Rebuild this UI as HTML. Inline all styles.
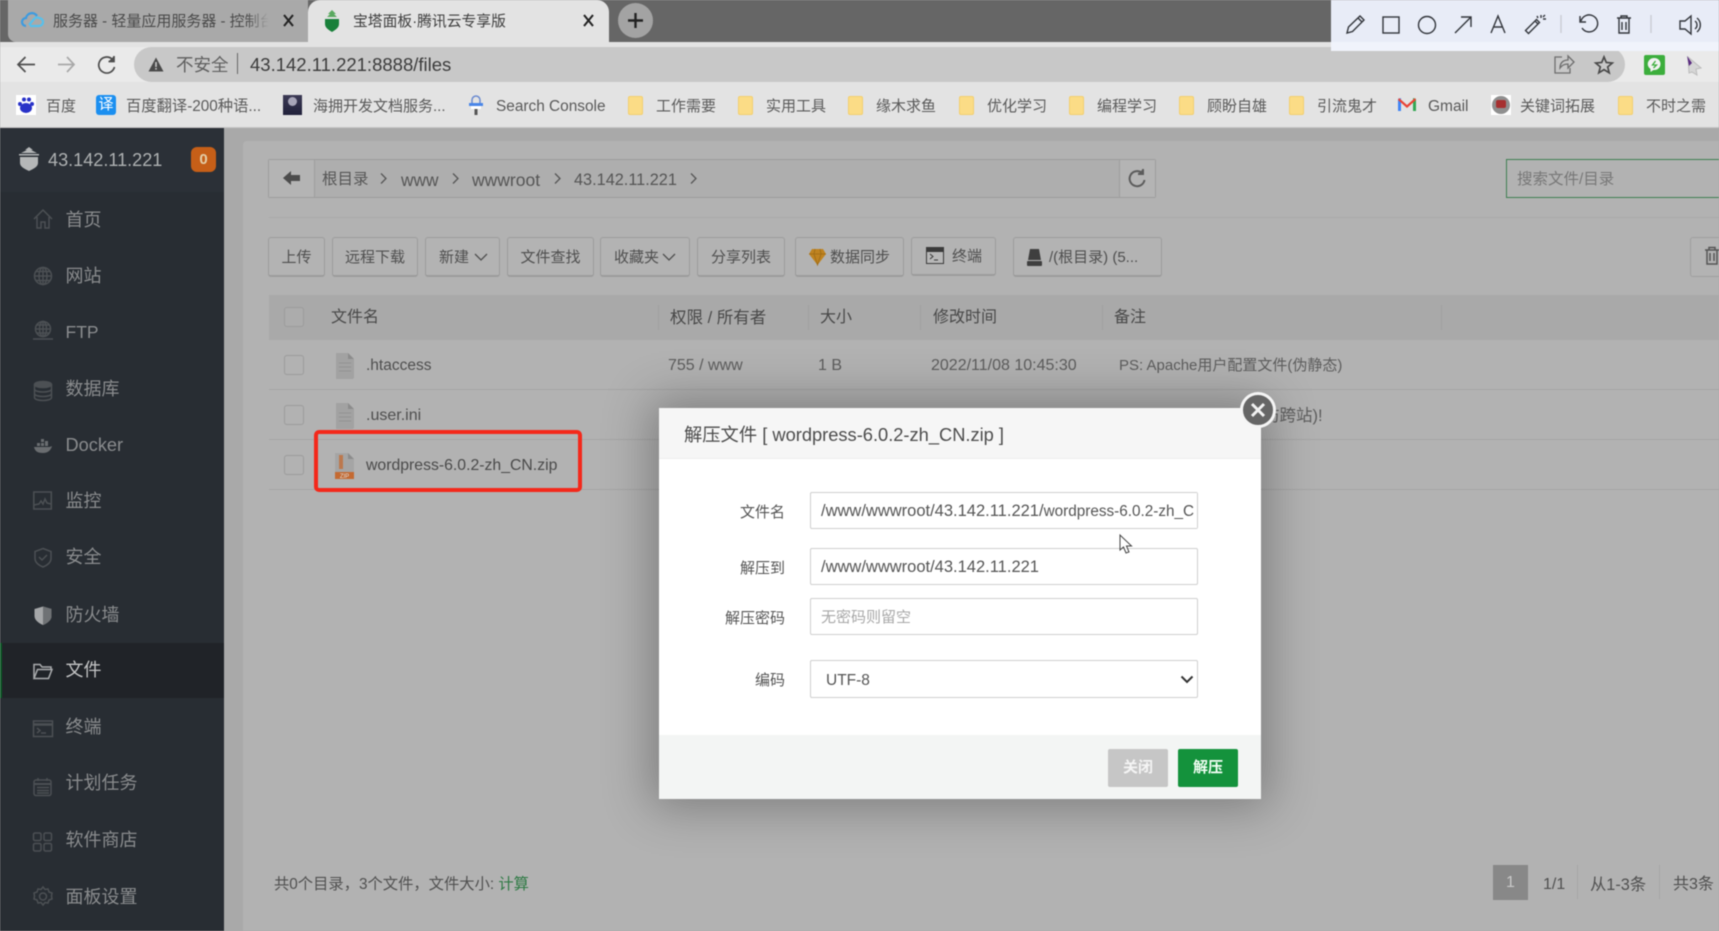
<!DOCTYPE html>
<html lang="zh-CN"><head><meta charset="utf-8"><title>宝塔面板·腾讯云专享版</title>
<style>
*{box-sizing:border-box}
html,body{margin:0;padding:0;width:1719px;height:931px;overflow:hidden;background:#aaa}
body{font-family:"Liberation Sans","Noto Sans CJK SC",sans-serif;color:#555;position:relative}
#root{position:absolute;left:0;top:0;width:1719px;height:931px;overflow:hidden;filter:blur(.45px)}
.b{position:absolute}
.t{position:absolute;white-space:nowrap;line-height:20px;height:20px}
svg{position:absolute;overflow:visible}
.bm{font-size:15px;top:97px;color:#5a5a5a}
.fd{position:absolute;top:96px;width:15px;height:19px;background:#fbdc86;border:1px solid #f3cf6e;border-radius:2px}
.m{font-size:18px;left:65.500px;color:#8a8c8e}
.ic{fill:none;stroke:#4c5054;stroke-width:1.5}
.btn{position:absolute;top:237px;height:40px;border:1px solid #9c9c9c;border-bottom-width:2px;border-radius:3px;background:#b3b3b3;font-size:15px;color:#4f4f4f;text-align:center;line-height:39px;white-space:nowrap}
.chk{position:absolute;left:284px;width:20px;height:20px;border:1px solid #9b9b9b;border-radius:3px;background:#b2b2b2}
.hd{font-size:16.500px;top:308px;color:#484848}
.sep{position:absolute;top:305px;width:1px;height:25px;background:#a0a0a0}
.cell{font-size:16px;color:#5d5d5d}
.ln{position:absolute;left:269px;right:0;height:1px;background:#a5a5a5}
.lbl{position:absolute;width:100px;left:685px;text-align:right;font-size:15px;line-height:20px;color:#555}
.inp{position:absolute;left:810px;width:388px;height:37px;background:#fff;border:1px solid #cfcfcf;border-radius:2px;font-size:16.5px;line-height:37px;padding-left:10px;color:#555;white-space:nowrap;overflow:hidden}
.tool{fill:none;stroke:#33363c;stroke-width:1.4}
.crumb{fill:none;stroke:#555;stroke-width:1.3}
</style></head><body><div id="root">

<!-- tab strip -->
<div class="b" style="left:0;top:0;width:1719px;height:42px;background:#666"></div>
<div class="b" style="left:8px;top:0;width:300px;height:42px;background:#a9a9a9;border-radius:0 0 0 8px"></div>
<div class="b" style="left:308px;top:0;width:301px;height:42px;background:#e3e3e3;border-radius:12px 12px 0 0"></div>
<svg style="left:22px;top:11px" width="22" height="18" viewBox="0 0 22 18"><path d="M4 15a4 4 0 0 1 0-8a6 6 0 0 1 11-2" fill="none" stroke="#3d9be0" stroke-width="2.2"/><path d="M8 15h9a4 4 0 0 0 0-8a4 4 0 0 0-5 1l-5 6" fill="none" stroke="#57c0ec" stroke-width="2.2"/></svg>
<div class="t" style="left:53px;top:12px;width:220px;overflow:hidden;font-size:15px;color:#4a4a4a">服务器 - 轻量应用服务器 - 控制台</div>
<div class="b" style="left:246px;top:10px;width:27px;height:22px;background:linear-gradient(90deg,rgba(169,169,169,0),#a9a9a9 85%)"></div>
<svg style="left:283px;top:14px" width="11" height="13"><path d="M1 1l9 11M10 1L1 12" stroke="#222" stroke-width="2"/></svg>
<svg style="left:323px;top:10px" width="18" height="22" viewBox="0 0 18 22"><path d="M9 0l4 4h-2l3 3H4l3-3H5z" fill="#5aa960"/><path d="M2 9h14v5c0 4-4 6-7 8c-3-2-7-4-7-8z" fill="#18803a"/></svg>
<div class="t" style="left:353px;top:12px;font-size:14.800px;color:#3e3e3e">宝塔面板·腾讯云专享版</div>
<svg style="left:583px;top:14px" width="11" height="13"><path d="M1 1l9 11M10 1L1 12" stroke="#222" stroke-width="2"/></svg>
<div class="b" style="left:618px;top:3px;width:35px;height:35px;border-radius:50%;background:#a3a3a3"></div>
<svg style="left:626px;top:11px" width="19" height="19"><path d="M9.5 2v15M2 9.5h15" stroke="#222" stroke-width="2.4"/></svg>

<!-- toolbar -->
<div class="b" style="left:0;top:42px;width:1719px;height:40px;background:#eaeaea"></div>
<div class="b" style="left:0;top:42px;width:1719px;height:5px;background:#e3e3e3"></div>
<div class="b" style="left:134px;top:47px;width:1491px;height:35px;background:#c8c8c8;border-radius:18px"></div>
<svg style="left:16px;top:54px" width="120" height="22" fill="none" stroke="#4e4e4e" stroke-width="1.7"><path d="M19 10.500H2M9.500 3L2 10.500 9.500 18"/><path d="M42 10.500h16M51 3l7 7.500-7 7.500" stroke="#a8a8a8"/><path d="M96 5a8 8 0 1 0 2.500 8"/><path d="M98 2v5.500h-5.500" fill="#4e4e4e"/></svg>
<svg style="left:148px;top:57px" width="16" height="15"><path d="M8 0.500L15.500 14.500H.5z" fill="#4a4a4a"/><rect x="7.200" y="5" width="1.600" height="5" fill="#c8c8c8"/><rect x="7.200" y="11" width="1.600" height="1.600" fill="#c8c8c8"/></svg>
<div class="t" style="left:176px;top:55px;font-size:17.500px;color:#5f5f5f">不安全</div>
<div class="b" style="left:237px;top:53px;width:1px;height:21px;background:#666"></div>
<div class="t" style="left:250px;top:55px;font-size:18.500px;color:#3c3c3c">43.142.11.221:8888/files</div>
<svg style="left:1553px;top:54px" width="60" height="22" fill="none" stroke="#6e6e6e" stroke-width="1.300"><path d="M9 3H2v16h15v-5"/><path d="M7 14c0-5 3-8 8-8V2l6 6-6 6v-4c-3 0-6 1-8 4z"/><path d="M51 3l2.300 5.500 6 .5-4.600 3.900 1.500 5.900-5.200-3.200-5.200 3.200 1.500-5.900-4.600-3.900 6-.5z" stroke="#4a4a4a" stroke-width="1.700"/></svg>
<div class="b" style="left:1644px;top:55px;width:21px;height:20px;background:#3cae3c;border-radius:2px"></div>
<svg style="left:1647px;top:57px" width="15" height="16"><path d="M7.500 1a6 6 0 0 1 0 12h-1l-3 2v-3a6 6 0 0 1 4-11z" fill="#f2f2f2"/><path d="M8.500 4L5.500 8h4l-3 3" fill="none" stroke="#3cae3c" stroke-width="1.300"/></svg>
<svg style="left:1686px;top:56px" width="16" height="20"><path d="M2 1l13 11-5 1 1 6-5-3-3 1z" fill="#d6d6d6" stroke="#bbb"/><path d="M1 0l2 10 3-3z" fill="#5a2a80"/></svg>

<!-- bookmarks -->
<div class="b" style="left:0;top:82px;width:1719px;height:45px;background:#e3e3e3"></div>
<div class="b" style="left:0;top:127px;width:1719px;height:1px;background:#c6c6c6"></div>
<div class="b" style="left:16px;top:95px;width:20px;height:20px;background:#fff"></div>
<svg style="left:17px;top:96px" width="18" height="18"><ellipse cx="9" cy="12" rx="6" ry="5" fill="#2932c8"/><circle cx="3" cy="8" r="2" fill="#2932c8"/><circle cx="15" cy="8" r="2" fill="#2932c8"/><circle cx="7" cy="3.500" r="2" fill="#2932c8"/><circle cx="12" cy="3.500" r="2" fill="#2932c8"/></svg>
<div class="t bm" style="left:46px">百度</div>
<div class="b" style="left:96px;top:95px;width:20px;height:20px;background:#1b8ff0;border-radius:3px;color:#fff;font-size:15px;line-height:20px;text-align:center">译</div>
<div class="t bm" style="left:126px;font-size:15.300px">百度翻译-200种语...</div>
<div class="b" style="left:283px;top:95px;width:19px;height:20px;background:linear-gradient(#3c3a55,#20203a)"></div>
<div class="b" style="left:288px;top:97px;width:9px;height:9px;border-radius:50%;background:#a7a5b8"></div>
<div class="t bm" style="left:313px">海拥开发文档服务...</div>
<svg style="left:468px;top:95px" width="16" height="20"><path d="M4 8V5a4 4 0 0 1 8 0v3" fill="none" stroke="#6a8ad0" stroke-width="1.500"/><rect x="1" y="8" width="14" height="3" fill="#4a86e8"/><rect x="3" y="11" width="10" height="3" fill="#fff"/><path d="M8 20v-6" stroke="#555" stroke-width="3"/></svg>
<div class="t bm" style="left:496px;font-size:15.400px">Search Console</div>
<div class="fd" style="left:628px"></div><div class="t bm" style="left:656px">工作需要</div>
<div class="fd" style="left:738px"></div><div class="t bm" style="left:766px">实用工具</div>
<div class="fd" style="left:848px"></div><div class="t bm" style="left:876px">缘木求鱼</div>
<div class="fd" style="left:959px"></div><div class="t bm" style="left:987px">优化学习</div>
<div class="fd" style="left:1069px"></div><div class="t bm" style="left:1097px">编程学习</div>
<div class="fd" style="left:1179px"></div><div class="t bm" style="left:1207px">顾盼自雄</div>
<div class="fd" style="left:1289px"></div><div class="t bm" style="left:1317px">引流鬼才</div>
<svg style="left:1398px;top:97px" width="18" height="15"><path d="M0 14V2l3-1v13z" fill="#4285f4"/><path d="M18 14V2l-3-1v13z" fill="#34a853"/><path d="M1 1l8 7 8-7 1 2-9 8-9-8z" fill="#ea4335"/></svg>
<div class="t bm" style="left:1428px;font-size:15.500px">Gmail</div>
<div class="b" style="left:1491px;top:95px;width:20px;height:20px;background:#fff"></div>
<div class="b" style="left:1492px;top:96px;width:18px;height:18px;background:#8f8f8f;border-radius:50%"></div>
<div class="b" style="left:1496px;top:100px;width:10px;height:8px;background:#a63030;border-radius:2px"></div>
<div class="t bm" style="left:1520px">关键词拓展</div>
<div class="fd" style="left:1618px"></div><div class="t bm" style="left:1646px">不时之需</div>

<!-- annotation toolbar -->
<div class="b" style="left:1331px;top:0;width:388px;height:42px;background:#e8ecf7"></div>
<div class="b" style="left:1331px;top:42px;width:388px;height:9px;background:#f0f3fb"></div>
<svg style="left:1331px;top:0" width="388" height="50" class="tool">
<path d="M16 33l1.500-6L29 16l4 4-11.500 11.500zM27 18l4 4"/>
<rect x="52" y="17" width="16" height="16"/>
<circle cx="96" cy="25" r="8.500"/>
<path d="M124 33l16-16M130 17h10v10"/>
<path d="M160 33l7-17 7 17M162.500 27h9"/>
<path transform="translate(3,0)" d="M194 33l-2.500-2.500 11-11 3 3-11 11zM201 21l3 3M207 15v3M212 19h-3M211 15l-2 2M203 16l1 2"/>
<path d="M230 15v18" stroke="#c9ccd4"/>
<path transform="translate(-3,0)" d="M252 16v6h6M253 21a8.500 8.500 0 1 1 1 7"/>
<path transform="translate(3,0)" d="M283 18h14M287 18v-2h6v2M285 18v15h10V18M288 22v8M292 22v8"/>
<path d="M320 15v18" stroke="#c9ccd4"/>
<path transform="translate(-2,0)" d="M351 21h5l6-5v18l-6-5h-5zM366 21a5 5 0 0 1 0 8M368 18a9 9 0 0 1 0 14"/>
</svg>

<!-- page background -->
<div class="b" style="left:0;top:128px;width:1719px;height:803px;background:#a9a9a9"></div>
<div class="b" style="left:243px;top:141px;width:1476px;height:790px;background:#b2b2b2;border-radius:4px 0 0 0"></div>

<!-- sidebar -->
<div class="b" style="left:0;top:128px;width:224px;height:803px;background:#282d33"></div>
<div class="b" style="left:0;top:128px;width:224px;height:64px;background:#2b3037"></div>
<svg style="left:18px;top:147px" width="22" height="24"><path d="M11 0l4 3h-2l6 3H3l6-3H7z" fill="#b5b7b8"/><rect x="1" y="7" width="20" height="1.500" fill="#b5b7b8"/><path d="M2 10h18v6c0 4-5 6-9 8c-4-2-9-4-9-8z" fill="#b5b7b8"/></svg>
<div class="t" style="left:48px;top:150px;font-size:18.100px;color:#aeb1b2">43.142.11.221</div>
<div class="b" style="left:191px;top:147px;width:25px;height:25px;background:#c65f18;border-radius:6px;color:#e4cfa9;font-size:15px;font-weight:bold;text-align:center;line-height:25px">0</div>
<div class="b" style="left:0;top:643px;width:224px;height:55px;background:#202328"></div>
<div class="b" style="left:0;top:643px;width:2px;height:55px;background:#0b5a25"></div>

<svg style="left:33px;top:205px" width="20" height="710" class="ic">
<path d="M1 15L10 6l9 9M4 13v11h4v-6h4v6h4V13" transform="translate(0,-1)"/>
<g transform="translate(0,62)"><circle cx="10" cy="9" r="8.500"/><path d="M1.500 9h17M10 .5v17M3 4.500h14M3 13.500h14"/><ellipse cx="10" cy="9" rx="4" ry="8.500"/></g>
<g transform="translate(0,116)"><circle cx="10" cy="8" r="7.500"/><path d="M2.500 8h15M10 .5v15M4 4h12M4 12h12"/><ellipse cx="10" cy="8" rx="3.500" ry="7.500"/><path d="M0 18h20"/></g>
<g transform="translate(0,176)"><ellipse cx="10" cy="3.500" rx="8.500" ry="3" fill="#4c5054"/><path d="M1.500 3.500v13c0 4 17 4 17 0v-13M1.500 8c0 4 17 4 17 0M1.500 12.500c0 4 17 4 17 0"/></g>
<g transform="translate(0,233)"><path d="M1 9h15c1 0 3-1 3-1c-1 4-4 7-9 7c-6 0-8-2-9-6z" fill="#6a6d70" stroke="none"/><rect x="4" y="5" width="3" height="3" fill="#6a6d70" stroke="none"/><rect x="8" y="5" width="3" height="3" fill="#6a6d70" stroke="none"/><rect x="8" y="1" width="3" height="3" fill="#6a6d70" stroke="none"/><rect x="12" y="3" width="3" height="5" fill="#6a6d70" stroke="none"/></g>
<g transform="translate(0,286)"><rect x=".8" y="1" width="17.500" height="17"/><path d="M1 14l5-1 2-3 2 3 2-5 2 4 4 1"/></g>
<g transform="translate(0,343)"><path d="M10 .5l8 3v7c0 4-4 7-8 8.500c-4-1.500-8-4.500-8-8.500v-7z"/><path d="M6 9l3 3 5-5"/></g>
<g transform="translate(0,401)"><path d="M10 .5l8.500 2.500v7c0 4-4 7-8.500 9c-4.500-2-8.500-5-8.500-9V3z" fill="#a5a7a9" stroke="none"/><path d="M10 .5l8.500 2.500v7c0 4-4 7-8.500 9z" fill="#6f7275" stroke="none"/></g>
<g transform="translate(0,458)" style="stroke:#a9abad"><path d="M1 15V1.500h6l2 2.500h9v2"/><path d="M1 15.500h14.500L19 6.500H4.500L1 15.500z"/></g>
<g transform="translate(0,515)"><rect x=".5" y="1" width="19" height="15.500"/><path d="M.5 4.500h19" stroke-width="2.500"/><path d="M4 8l3 2.500-3 2.500M8 13h5"/></g>
<g transform="translate(0,573)"><rect x="1" y="2" width="17" height="15.500" rx="2"/><path d="M1 6h17" stroke-width="2"/><path d="M5 0v3M14 0v3M4 9.500h12M4 12.500h12M4 15h12"/></g>
<g transform="translate(0,627)"><rect x=".5" y="1" width="7.500" height="7.500" rx="1.500"/><rect x="11" y="1" width="7.500" height="7.500" rx="1.500"/><rect x=".5" y="11.500" width="7.500" height="7.500" rx="1.500"/><rect x="11" y="11.500" width="7.500" height="7.500" rx="1.500"/></g>
<g transform="translate(0,682)"><path d="M10 1l2 2.500 3-.5 1 3 3 1-.5 3 .5 3-3 1-1 3-3-.5-2 2.500-2-2.500-3 .5-1-3-3-1 .5-3-.5-3 3-1 1-3 3 .5z" transform="translate(0,-1)"/><circle cx="10" cy="9.500" r="3.500"/></g>
</svg>
<div class="t m" style="top:210px">首页</div>
<div class="t m" style="top:266px">网站</div>
<div class="t m" style="top:322px;font-size:17.500px">FTP</div>
<div class="t m" style="top:379px">数据库</div>
<div class="t m" style="top:435px;font-size:18.200px">Docker</div>
<div class="t m" style="top:491px">监控</div>
<div class="t m" style="top:547px">安全</div>
<div class="t m" style="top:605px">防火墙</div>
<div class="t m" style="top:660px;color:#c4c5c6">文件</div>
<div class="t m" style="top:717px">终端</div>
<div class="t m" style="top:773px">计划任务</div>
<div class="t m" style="top:830px">软件商店</div>
<div class="t m" style="top:887px">面板设置</div>

<!-- breadcrumb -->
<div class="b" style="left:268px;top:159px;width:888px;height:39px;background:#aeaeae;border:1px solid #9d9d9d;border-radius:2px"></div>
<div class="b" style="left:269px;top:160px;width:46px;height:37px;background:#b4b4b4;border-right:1px solid #9d9d9d"></div>
<div class="b" style="left:1119px;top:160px;width:36px;height:37px;background:#b4b4b4;border-left:1px solid #9d9d9d"></div>
<svg style="left:283px;top:170px" width="18" height="16"><path d="M0 8l8-7v4h9v6H8v4z" fill="#4c4c4c"/></svg>
<svg style="left:1127px;top:168px" width="20" height="20" fill="none" stroke="#5c5c5c" stroke-width="2"><path d="M15 5a7.500 7.500 0 1 0 2.500 7"/><path d="M16 1v5h-5" fill="#5c5c5c"/></svg>
<div class="t" style="left:322px;top:170px;font-size:15.500px;color:#555">根目录</div>
<div class="t" style="left:401px;top:170px;font-size:17.300px;color:#555">www</div>
<div class="t" style="left:472px;top:170px;font-size:17.500px;color:#555">wwwroot</div>
<div class="t" style="left:574px;top:170px;font-size:16.300px;color:#555">43.142.11.221</div>
<svg style="left:380px;top:172px" width="320" height="14" class="crumb"><path d="M1 1.500l5 5-5 5M73 1.500l5 5-5 5M175 1.500l5 5-5 5M311 1.500l5 5-5 5"/></svg>

<!-- search -->
<div class="b" style="left:1506px;top:159px;width:220px;height:39px;border:1px solid #3f7f52;background:#b2b2b2"></div>
<div class="t" style="left:1517px;top:170px;font-size:15.500px;color:#777">搜索文件/目录</div>
<div class="b" style="left:269px;top:217px;width:1450px;height:1px;background:#aaa"></div>

<!-- action buttons -->
<div class="btn" style="left:268px;width:57px">上传</div>
<div class="btn" style="left:332px;width:86px">远程下载</div>
<div class="btn" style="left:425px;width:75px;text-align:left;padding-left:13px">新建</div>
<svg style="left:474px;top:253px" width="14" height="9"><path d="M1 1l6 6 6-6" fill="none" stroke="#4f4f4f" stroke-width="1.300"/></svg>
<div class="btn" style="left:507px;width:87px">文件查找</div>
<div class="btn" style="left:600px;width:90px;text-align:left;padding-left:13px">收藏夹</div>
<svg style="left:662px;top:253px" width="14" height="9"><path d="M1 1l6 6 6-6" fill="none" stroke="#4f4f4f" stroke-width="1.300"/></svg>
<div class="btn" style="left:697px;width:88px">分享列表</div>
<div class="btn" style="left:795px;width:109px;text-align:left;padding-left:34px">数据同步</div>
<svg style="left:809px;top:249px" width="17" height="17"><path d="M3 0h11l3 5-8.500 11L0 5z" fill="#bf8320"/><path d="M0 5h17M6 0L5 5l3.500 11L12 5l-1-5" stroke="#9e6b16" fill="none" stroke-width=".8"/></svg>
<div class="btn" style="left:911px;width:85px;height:39px;text-align:left;padding-left:40px;line-height:37px">终端</div>
<svg style="left:926px;top:247px" width="18" height="18" fill="none" stroke="#3a3a3a"><rect x=".5" y=".5" width="17" height="16" fill="#b8b8b8"/><rect x=".5" y=".5" width="17" height="4" fill="#3a3a3a"/><path d="M4 7l3 2.500-3 2.500M8 13h4"/></svg>
<div class="btn" style="left:1013px;width:149px;text-align:left;padding-left:35px">/(根目录) (5...</div>
<svg style="left:1027px;top:249px" width="15" height="18"><path d="M3 0h9l2 11H1z" fill="#3f3f3f"/><rect x="0" y="12" width="15" height="5" rx="1" fill="#3f3f3f"/></svg>
<div class="b" style="left:1690px;top:237px;width:40px;height:40px;border:1px solid #9f9f9f;border-radius:3px;background:#b3b3b3"></div>
<svg style="left:1705px;top:246px" width="14" height="20" fill="none" stroke="#555" stroke-width="1.500"><path d="M0 4h14M4 4V1.500h6V4M2 4v14h10V4M5 7v8M9 7v8"/></svg>

<!-- table -->
<div class="b" style="left:269px;top:295px;width:1450px;height:45px;background:#a9a9a9"></div>
<div class="chk" style="top:307px;background:#acacac"></div>
<div class="t hd" style="left:331px;font-size:16px">文件名</div>
<div class="sep" style="left:658px"></div><div class="t hd" style="left:670px">权限 / 所有者</div>
<div class="sep" style="left:808px"></div><div class="t hd" style="left:820px;font-size:16px">大小</div>
<div class="sep" style="left:920px"></div><div class="t hd" style="left:933px;font-size:16px">修改时间</div>
<div class="sep" style="left:1102px"></div><div class="t hd" style="left:1114px;font-size:16px">备注</div>
<div class="sep" style="left:1441px"></div>
<div class="ln" style="top:389px"></div><div class="ln" style="top:439px"></div><div class="ln" style="top:489px"></div>
<div class="chk" style="top:355px"></div><div class="chk" style="top:405px"></div><div class="chk" style="top:455px"></div>
<svg style="left:335px;top:353px" width="20" height="26"><path d="M1 0h12l6 6v18a2 2 0 0 1-2 2H1z" fill="#a2a2a2"/><path d="M13 0l6 6h-6z" fill="#8c8c8c"/><path d="M4 10h12M4 14h12M4 18h12" stroke="#929292"/></svg>
<svg style="left:335px;top:403px" width="20" height="26"><path d="M1 0h12l6 6v18a2 2 0 0 1-2 2H1z" fill="#a2a2a2"/><path d="M13 0l6 6h-6z" fill="#8c8c8c"/><path d="M4 10h12M4 14h12M4 18h12" stroke="#929292"/></svg>
<svg style="left:334px;top:453px" width="21" height="26"><path d="M1 0h13l6 6v20H1z" fill="#a5a5a5"/><path d="M14 0l6 6h-6z" fill="#8c8c8c"/><rect x="1" y="19" width="19" height="7" fill="#c46a32"/><rect x="5" y="2" width="4" height="14" fill="#c46a32" opacity=".75"/><text x="10.500" y="25" font-size="6" text-anchor="middle" fill="#ddd" font-family="Liberation Sans">ZIP</text></svg>
<div class="t cell" style="left:366px;top:355px;color:#4f4f4f;font-size:15.500px;top:356px">.htaccess</div>
<div class="t cell" style="left:668px;top:356px">755 / www</div>
<div class="t cell" style="left:818px;top:356px">1 B</div>
<div class="t cell" style="left:931px;top:356px">2022/11/08 10:45:30</div>
<div class="t cell" style="left:1119px;top:356px;font-size:15px">PS: Apache用户配置文件(伪静态)</div>
<div class="t cell" style="left:366px;top:405px;color:#4f4f4f;top:406px">.user.ini</div>
<div class="t cell" style="left:1263px;top:406px;font-size:16.500px">防跨站)!</div>
<div class="t cell" style="left:366px;top:456px;color:#4a4a4a;font-size:15.800px">wordpress-6.0.2-zh_CN.zip</div>
<div class="b" style="left:314px;top:430px;width:268px;height:62px;border:4px solid #f4281a;border-radius:5px"></div>

<!-- footer -->
<div class="t" style="left:274px;top:875px;font-size:15.300px;color:#505050">共0个目录，3个文件，文件大小: <span style="color:#2f7a45">计算</span></div>
<div class="b" style="left:1493px;top:865px;width:35px;height:35px;background:#888;color:#c9c9c9;font-size:16px;line-height:35px;text-align:center">1</div>
<div class="b" style="left:1577px;top:865px;width:1px;height:34px;background:#a6a6a6"></div>
<div class="b" style="left:1659px;top:865px;width:1px;height:34px;background:#a6a6a6"></div>
<div class="t" style="left:1543px;top:875px;font-size:16px;color:#505050">1/1</div>
<div class="t" style="left:1590px;top:875px;font-size:16.300px;color:#505050">从1-3条</div>
<div class="t" style="left:1673px;top:875px;font-size:16px;color:#505050">共3条</div>

<!-- modal -->
<div class="b" style="left:659px;top:408px;width:602px;height:391px;background:#fff;box-shadow:0 0 45px 8px rgba(0,0,0,.3)"></div>
<div class="b" style="left:659px;top:408px;width:602px;height:51px;background:#f6f6f6;border-bottom:1px solid #eee"></div>
<div class="t" style="left:684px;top:425px;font-size:18.300px;color:#4c4c4c">解压文件 [ wordpress-6.0.2-zh_CN.zip ]</div>
<div class="b" style="left:1240px;top:392px;width:36px;height:36px;border-radius:50%;background:#666;border:3px solid #f5f5f5"></div>
<svg style="left:1250px;top:402px" width="16" height="16"><path d="M2 2l12 12M14 2L2 14" stroke="#f2f2f2" stroke-width="3"/></svg>

<div class="lbl" style="top:503px">文件名</div>
<div class="inp" style="top:492px">/www/wwwroot/43.142.11.221/<span style="font-size:15.300px">wordpress-6.0.2-zh_C</span></div>
<div class="b" style="left:1195px;top:493px;width:2px;height:35px;background:#fff"></div>
<div class="lbl" style="top:559px">解压到</div>
<div class="inp" style="top:548px">/www/wwwroot/43.142.11.221</div>
<div class="lbl" style="top:609px">解压密码</div>
<div class="inp" style="top:598px;font-size:15px;color:#a8a8a8">无密码则留空</div>
<div class="lbl" style="top:671px">编码</div>
<div class="inp" style="top:660px;height:38px;font-size:15.500px;padding-left:15px;line-height:39px">UTF-8</div>
<svg style="left:1180px;top:675px" width="14" height="10"><path d="M1.500 1.500L7 7l5.500-5.500" fill="none" stroke="#333" stroke-width="2"/></svg>
<svg style="left:1119px;top:534px" width="14" height="21"><path d="M1 1v15l3.500-3 2.500 6 3-1-2.500-6h5z" fill="#fff" stroke="#444" stroke-width="1"/></svg>

<div class="b" style="left:659px;top:735px;width:602px;height:64px;background:#f3f5f4"></div>
<div class="b" style="left:1108px;top:749px;width:60px;height:38px;background:#c6c6c6;border-radius:2px;color:#f4f4f4;font-size:15px;font-weight:bold;line-height:37px;text-align:center">关闭</div>
<div class="b" style="left:1178px;top:749px;width:60px;height:38px;background:#14923c;border-radius:2px;color:#f2fff5;font-size:15px;font-weight:bold;line-height:37px;text-align:center">解压</div>

</div></body></html>
